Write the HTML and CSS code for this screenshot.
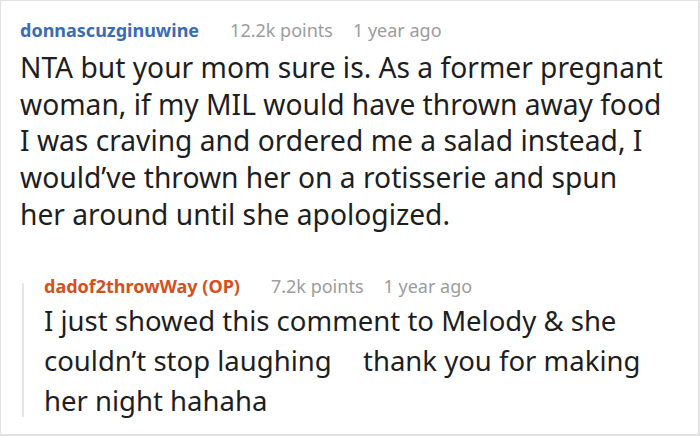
FILE: index.html
```html
<!DOCTYPE html>
<html>
<head>
<meta charset="utf-8">
<link rel="stylesheet" href="styles.css">
</head>
<body>
<div class="frame">
  <div class="comment">
    <div class="meta">
      <span class="user">donnascuzginuwine</span>
      <span class="info">12.2k points</span>
      <span class="info">1 year ago</span>
    </div>
    <p class="text">NTA but your mom sure is. As a former pregnant<br>woman, if my MIL would have thrown away food<br>I was craving and ordered me a salad instead, I<br>would’ve thrown her on a rotisserie and spun<br>her around until she apologized.</p>
  </div>
  <div class="reply">
    <div class="thread-line"></div>
    <div class="reply-body">
      <div class="meta">
        <span class="user op">dadof2throwWay (OP)</span>
        <span class="info">7.2k points</span>
        <span class="info">1 year ago</span>
      </div>
      <p class="text reply-text">I just showed this comment to Melody &amp; she<br>couldn’t stop laughing <span class="emoji"></span> thank you for making<br>her night hahaha</p>
    </div>
  </div>
</div>
</body>
</html>
```
FILE: styles.css
```css
html, body {
  margin: 0;
  padding: 0;
  background: #fff;
}
.frame {
  width: 700px;
  height: 436px;
  box-sizing: border-box;
  border: 1px solid #e2e2e2;
  border-right-width: 2px;
  border-bottom-width: 2px;
  padding: 17px 0 0 19px;
  font-family: "Noto Sans", "Open Sans", sans-serif;
  color: #1e1e1e;
  overflow: hidden;
}
.meta {
  display: flex;
  align-items: baseline;
  font-size: 18px;
  line-height: 24px;
  white-space: nowrap;
}
.user {
  font-weight: 700;
  color: #3a6bb8;
  margin-right: 31px;
}
.user.op {
  color: #d5501d;
}
.info {
  color: #9c9c9c;
  margin-right: 20px;
}
.text {
  margin: 7px 0 0 0;
  font-size: 28.2px;
  line-height: 36.7px;
  white-space: nowrap;
}
.reply {
  display: flex;
  margin-top: 41px;
  margin-left: 2px;
}
.thread-line {
  width: 2px;
  background: #e6e6e6;
  margin: 9px 0 4px 0;
  flex: none;
}
.reply-body {
  padding-left: 20px;
}
.reply-text {
  margin-top: 3px;
  font-size: 27.5px;
  line-height: 40px;
}
.emoji {
  display: inline-block;
  width: 17px;
}
```
